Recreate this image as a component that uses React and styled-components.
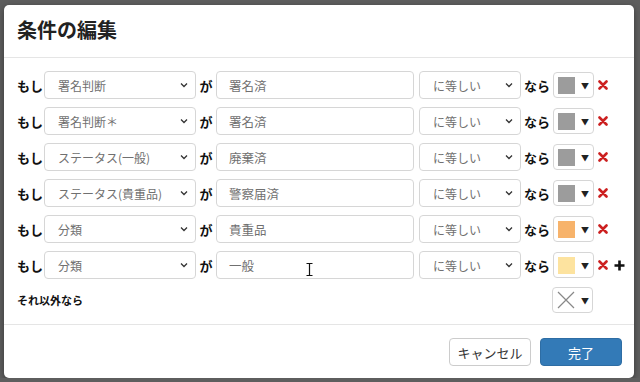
import React from "react";
import styled, { createGlobalStyle } from "styled-components";

const GlobalStyle = createGlobalStyle`
  html, body {
    margin: 0;
    padding: 0;
    background: #5e5e5e;
    font-family: "Noto Sans CJK JP", "Noto Sans", sans-serif;
  }
`;

const rows = [
  { field: "署名判断", value: "署名済", color: "#9c9c9c" },
  { field: "署名判断＊", value: "署名済", color: "#9c9c9c" },
  { field: "ステータス(一般)", value: "廃棄済", color: "#9c9c9c" },
  { field: "ステータス(貴重品)", value: "警察届済", color: "#9c9c9c" },
  { field: "分類", value: "貴重品", color: "#f7b36b" },
  { field: "分類", value: "一般", color: "#fde39f", last: true },
];

export default function App() {
  return (
    <>
      <GlobalStyle />
      <Modal>
        <Header>
          <Title>条件の編集</Title>
        </Header>
        <Body>
          {rows.map((row, i) => (
            <Row key={i}>
              <Label $width={27}>もし</Label>
              <Select $width={152}>
                <span>{row.field}</span>
                <Chevron />
              </Select>
              <Label $width={20} $center>
                が
              </Label>
              <Input>
                {row.value}
                {row.last && <Cursor />}
              </Input>
              <Select $width={102} $gap={5}>
                <span>に等しい</span>
                <Chevron />
              </Select>
              <Label $width={32} $center>
                なら
              </Label>
              <Picker>
                <Swatch $color={row.color} />
                <Caret>▼</Caret>
              </Picker>
              <Delete />
              {row.last && <Plus />}
            </Row>
          ))}
          <ElseRow>
            <ElseLabel>それ以外なら</ElseLabel>
            <Picker>
              <NoColor />
              <Caret>▼</Caret>
            </Picker>
          </ElseRow>
        </Body>
        <Footer>
          <Button>キャンセル</Button>
          <Button $primary>完了</Button>
        </Footer>
      </Modal>
    </>
  );
}

function Chevron() {
  return (
    <svg width="8" height="6" viewBox="0 0 8 6">
      <path d="M1 1.5 L4 4.5 L7 1.5" fill="none" stroke="#333" strokeWidth="1.3" />
    </svg>
  );
}

function Delete() {
  return (
    <IconWrap $left={4}>
      <svg width="10" height="10" viewBox="0 0 10 10">
        <path d="M1.5 1.5 L8.5 8.5 M8.5 1.5 L1.5 8.5" stroke="#cc2020" strokeWidth="2.6" strokeLinecap="round" />
      </svg>
    </IconWrap>
  );
}

function Plus() {
  return (
    <IconWrap $left={6}>
      <svg width="11" height="11" viewBox="0 0 11 11">
        <path d="M5.5 0.5 V10.5 M0.5 5.5 H10.5" stroke="#111" strokeWidth="2.6" />
      </svg>
    </IconWrap>
  );
}

function NoColor() {
  return (
    <svg width="18" height="18" viewBox="0 0 18 18">
      <path d="M1 1 L17 17 M17 1 L1 17" stroke="#888" strokeWidth="1.2" />
    </svg>
  );
}

function Cursor() {
  return (
    <CursorIcon width="7" height="13" viewBox="0 0 7 13">
      <path d="M0.5 0.5 H6.5 M3.5 0.5 V12.5 M0.5 12.5 H6.5" stroke="#111" strokeWidth="1.2" fill="none" />
    </CursorIcon>
  );
}

const Modal = styled.div`
  margin: 5px 0 0 4px;
  width: 630px;
  height: 373px;
  background: #fff;
  border-radius: 5px;
  box-shadow: 0 2px 6px rgba(0, 0, 0, 0.4);
  display: flex;
  flex-direction: column;
  overflow: hidden;
`;

const Header = styled.div`
  height: 53px;
  padding: 0 13px 4px;
  display: flex;
  align-items: center;
  border-bottom: 1px solid #e5e5e5;
  box-sizing: border-box;
`;

const Title = styled.h4`
  margin: 0;
  font-size: 20px;
  font-weight: 700;
  color: #222;
`;

const Body = styled.div`
  padding: 13px 13px 11px;
  display: flex;
  flex-direction: column;
  gap: 8px;
  border-bottom: 1px solid #e5e5e5;
`;

const Row = styled.div`
  display: flex;
  align-items: center;
  height: 28px;
`;

const Label = styled.span`
  width: ${(p) => p.$width}px;
  flex: none;
  white-space: nowrap;
  text-align: ${(p) => (p.$center ? "center" : "left")};
  font-size: 13px;
  font-weight: 700;
  color: #111;
`;

const Select = styled.div`
  width: ${(p) => p.$width}px;
  margin-left: ${(p) => p.$gap || 0}px;
  height: 28px;
  box-sizing: border-box;
  flex: none;
  display: flex;
  align-items: center;
  justify-content: space-between;
  padding: 0 7px 0 13px;
  border: 1px solid #d6d6d6;
  border-radius: 4px;
  font-size: 12px;
  color: #707070;
  white-space: nowrap;
`;

const Input = styled.div`
  position: relative;
  width: 198px;
  height: 28px;
  box-sizing: border-box;
  flex: none;
  display: flex;
  align-items: center;
  padding: 0 12px;
  border: 1px solid #d6d6d6;
  border-radius: 4px;
  font-size: 12.5px;
  color: #707070;
`;

const CursorIcon = styled.svg`
  position: absolute;
  left: 89px;
  top: 11px;
`;

const Picker = styled.div`
  width: 41px;
  height: 26px;
  box-sizing: border-box;
  flex: none;
  display: flex;
  align-items: center;
  gap: 6px;
  padding: 0 0 0 4px;
  border: 1px solid #d6d6d6;
  border-radius: 4px;
  background: #fff;
`;

const Swatch = styled.div`
  width: 17px;
  height: 17px;
  background: ${(p) => p.$color};
`;

const Caret = styled.span`
  font-size: 8px;
  color: #222;
`;

const IconWrap = styled.span`
  margin-left: ${(p) => p.$left}px;
  display: flex;
  align-items: center;
`;

const ElseRow = styled.div`
  display: flex;
  align-items: center;
  justify-content: space-between;
  padding-right: 28px;
  height: 26px;
`;

const ElseLabel = styled.span`
  font-size: 11px;
  font-weight: 700;
  color: #111;
`;

const Footer = styled.div`
  flex: 1;
  display: flex;
  justify-content: flex-end;
  align-items: flex-start;
  gap: 9px;
  padding: 13px 12px 0;
`;

const Button = styled.button`
  width: 82px;
  height: 28px;
  border-radius: 4px;
  font-family: inherit;
  font-size: 13px;
  border: 1px solid ${(p) => (p.$primary ? "#2e6da4" : "#ccc")};
  background: ${(p) => (p.$primary ? "#337ab7" : "#fff")};
  color: ${(p) => (p.$primary ? "#fff" : "#333")};
`;
